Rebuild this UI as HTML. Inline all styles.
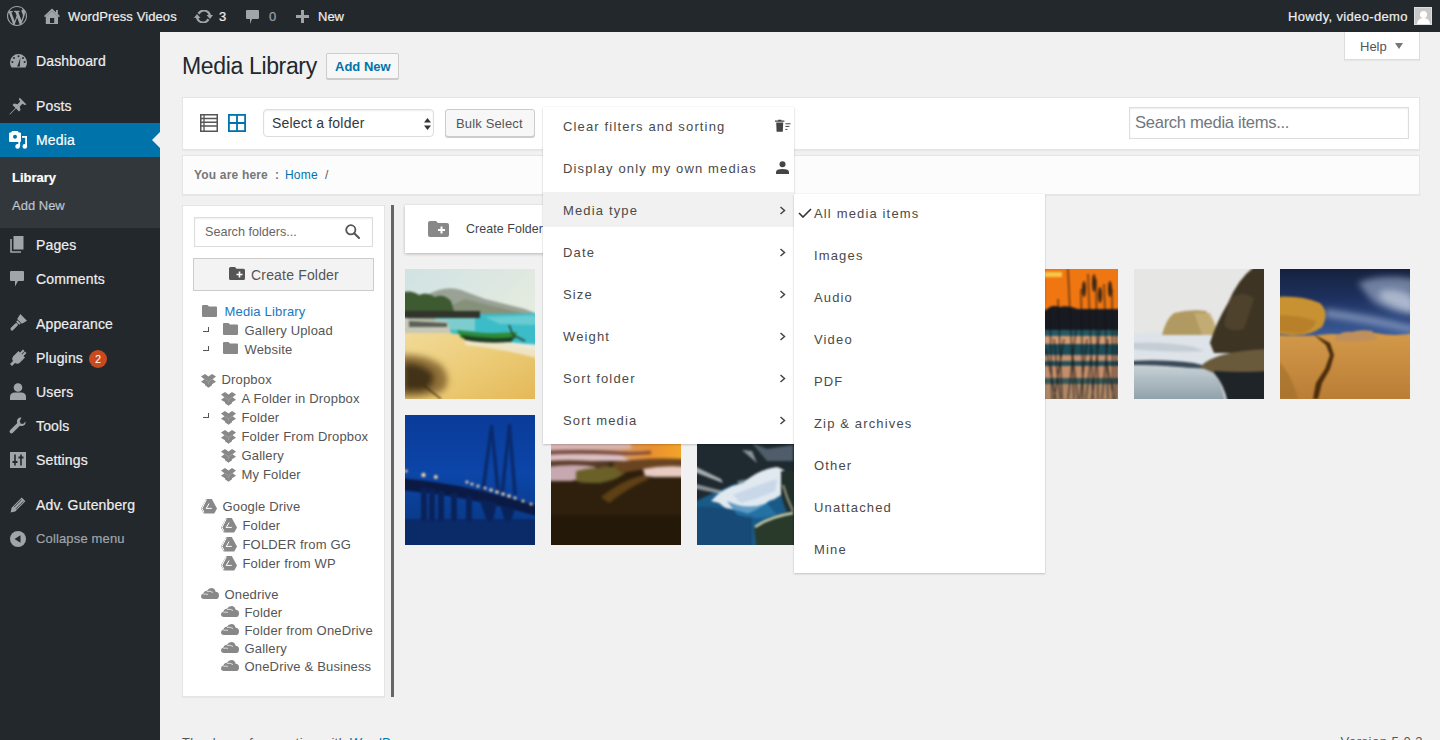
<!DOCTYPE html>
<html><head><meta charset="utf-8">
<style>
*{box-sizing:border-box;margin:0;padding:0}
html,body{width:1440px;height:740px;overflow:hidden;background:#f1f1f1;font-family:"Liberation Sans",sans-serif;color:#444;position:relative}
.a{position:absolute}
#bar{left:0;top:0;width:1440px;height:32px;background:#23282d;color:#eee;font-size:13px}
#bar .t{position:absolute;top:1px;line-height:32px;white-space:nowrap}
#side{left:0;top:32px;width:160px;height:708px;background:#23282d}
.mi{position:absolute;left:0;width:160px;height:34px;color:#eee;font-size:14px;line-height:34px;padding-left:36px;white-space:nowrap;letter-spacing:.15px}
.mi svg{position:absolute;left:0;top:0}
.sub{position:absolute;left:0;width:160px;color:rgba(240,245,250,.7);font-size:13px;padding-left:12px;line-height:28px;height:28px}
.mt{font-size:13px;line-height:15px;color:#4a4a4a;letter-spacing:1.15px;white-space:nowrap}
.mi,.sub,#bar .t{-webkit-text-stroke:.2px}
</style></head><body>
<!-- ADMIN BAR -->
<div id="bar" class="a">
  <svg class="a" style="left:7px;top:6px" width="20" height="20" viewBox="0 0 20 20"><path fill="#a0a5aa" d="M20 10c0-5.52-4.48-10-10-10S0 4.48 0 10s4.48 10 10 10 10-4.48 10-10zM7.78 15.37L4.37 6.22c.55-.02 1.17-.08 1.17-.08.5-.06.44-1.13-.06-1.11 0 0-1.45.11-2.37.11-.18 0-.37 0-.58-.01C4.12 2.69 6.87 1.11 10 1.11c2.33 0 4.45.87 6.05 2.34-.68-.11-1.65.39-1.65 1.58 0 .74.45 1.36.9 2.1.35.61.55 1.36.55 2.46 0 1.49-1.4 5-1.4 5l-3.03-8.37c.54-.02.82-.17.82-.17.5-.05.44-1.25-.06-1.22 0 0-1.44.12-2.38.12-.87 0-2.33-.12-2.33-.12-.5-.03-.56 1.2-.06 1.22l.92.08 1.26 3.41zM17.41 10c.24-.64.74-1.87.43-4.25.7 1.29 1.05 2.71 1.05 4.25 0 3.29-1.73 6.24-4.4 7.78.97-2.59 1.94-5.2 2.92-7.78zM6.1 18.09C3.12 16.65 1.11 13.53 1.11 10c0-1.3.23-2.48.72-3.59C3.25 10.3 4.67 14.2 6.1 18.09zm4.03-6.63l2.58 6.98c-.86.29-1.760.45-2.710.45-.79 0-1.57-.11-2.29-.33.81-2.380 1.620-4.740 2.420-7.100z"/></svg>
  <svg class="a" style="left:44px;top:8px" width="16" height="17" viewBox="0 0 16 17"><path d="M0.6 8.6L8 1.6L15.4 8.6" fill="none" stroke="#a0a5aa" stroke-width="1.6"/><rect x="12" y="2" width="1.8" height="4.5" fill="#a0a5aa"/><path d="M1.8 8.4L8 2.8L14 8.4V16H1.8Z" fill="#a0a5aa"/><rect x="6" y="10" width="4.2" height="5" fill="#23282d"/></svg>
  <div class="t" style="left:68px;letter-spacing:.1px">WordPress Videos</div>
  <svg class="a" style="left:194px;top:10px" width="19" height="13" viewBox="0 0 19 13"><path d="M9.5 1.5 A5 5 0 0 1 14.5 5 L12.5 5 L16 9 L19 5 L17 5 A7.5 7.5 0 0 0 3.5 3 L5.5 4.5 A5 5 0 0 1 9.5 1.5 Z M9.5 11.5 A5 5 0 0 1 4.5 8 L6.5 8 L3 4 L0 8 L2 8 A7.5 7.5 0 0 0 15.5 10 L13.5 8.5 A5 5 0 0 1 9.5 11.5 Z" fill="#a0a5aa"/></svg>
  <div class="t" style="left:219px">3</div>
  <svg class="a" style="left:246px;top:10px" width="13" height="14" viewBox="0 0 13 14"><path d="M0 1 Q0 0 1 0 L12 0 Q13 0 13 1 L13 8 Q13 9 12 9 L6 9 L4 14 L4 9 L1 9 Q0 9 0 8 Z" fill="#a0a5aa"/></svg>
  <div class="t" style="left:269px;color:#a0a5aa">0</div>
  <svg class="a" style="left:296px;top:10px" width="13" height="13" viewBox="0 0 13 13"><path d="M5 0 H8 V5 H13 V8 H8 V13 H5 V8 H0 V5 H5 Z" fill="#a0a5aa"/></svg>
  <div class="t" style="left:318px">New</div>
  <div class="t" style="left:1288px;letter-spacing:.35px">Howdy, video-demo</div>
  <div class="a" style="left:1414px;top:7px;width:18px;height:18px;background:#c8c8c8;border:1px solid #ddd;overflow:hidden">
    <div class="a" style="left:5px;top:3px;width:7px;height:7px;border-radius:50%;background:#fff"></div>
    <div class="a" style="left:2px;top:10px;width:13px;height:10px;border-radius:6px 6px 0 0;background:#fff"></div>
  </div>
</div>

<!-- SIDEBAR -->
<div id="side" class="a">
  <div class="mi" style="top:12px">Dashboard</div>
  <div class="mi" style="top:57px">Posts</div>
  <div class="mi" style="top:91px;background:#0073aa;color:#fff">Media</div>
  <div class="a" style="left:0;top:125px;width:160px;height:71px;background:#32373c"></div>
  <div class="sub" style="top:132px;color:#fff;font-weight:bold">Library</div>
  <div class="sub" style="top:160px">Add New</div>
  <div class="mi" style="top:196px">Pages</div>
  <div class="mi" style="top:230px">Comments</div>
  <div class="mi" style="top:275px">Appearance</div>
  <div class="mi" style="top:309px">Plugins</div>
  <div class="mi" style="top:343px">Users</div>
  <div class="mi" style="top:377px">Tools</div>
  <div class="mi" style="top:411px">Settings</div>
  <div class="mi" style="top:456px">Adv. Gutenberg</div>
  <div class="mi" style="top:490px;color:#a0a5aa;font-size:13px">Collapse menu</div>
</div>

<!-- SIDEBAR ICONS -->
<svg class="a" style="left:10px;top:54px" width="17" height="14" viewBox="0 0 17 14"><path d="M8.5 0A8.5 8.5 0 0 0 0 8.5Q0 11.5 1.5 13.5H15.5Q17 11.5 17 8.5A8.5 8.5 0 0 0 8.5 0Z" fill="#a0a5aa"/><g fill="#23282d"><circle cx="8.5" cy="2.3" r="1"/><circle cx="4" cy="4" r="1"/><circle cx="13" cy="4" r="1"/><circle cx="2.4" cy="8" r="1"/><circle cx="14.6" cy="8" r="1"/><path d="M10.5 3.5L8 10.5L7 12.5H10L9.8 10.5Z"/></g></svg>
<svg class="a" style="left:9px;top:97px" width="18" height="18" viewBox="0 0 18 18"><path d="M10.5 0.5L17.5 7.5L15.5 8L13.5 6.8L10.8 9.5L11.5 13L10 14.5L7 11.5L1 17.5L0.5 17L6.5 11L3.5 8L5 6.5L8.5 7.2L11.2 4.5L10 2.5Z" fill="#a0a5aa"/></svg>
<svg class="a" style="left:8px;top:130px" width="20" height="20" viewBox="0 0 20 20"><path d="M1 3.5Q1 2.5 2 2.5H3.2L4 1H9.8L10.6 2.5H12Q13 2.5 13 3.5V11Q13 12 12 12H2Q1 12 1 11Z" fill="#fff"/><circle cx="7" cy="6.8" r="2" fill="#0073aa"/><rect x="14" y="6" width="5" height="1.8" fill="#fff"/><rect x="17.2" y="6" width="1.8" height="11" fill="#fff"/><circle cx="16.8" cy="16.4" r="2.3" fill="#fff"/><rect x="10.3" y="11" width="1.8" height="5" fill="#fff"/><circle cx="9.6" cy="16.4" r="2.3" fill="#fff"/></svg>
<svg class="a" style="left:10px;top:236px" width="14" height="17" viewBox="0 0 14 17"><path d="M3.5 0H13.5V13.5H3.5Z" fill="#a0a5aa"/><path d="M1 3V16H11" stroke="#a0a5aa" stroke-width="1.6" fill="none"/></svg>
<svg class="a" style="left:10px;top:271px" width="14" height="16" viewBox="0 0 14 16"><path d="M1 0H13Q14 0 14 1V9Q14 10 13 10H8L5 15.5V10H1Q0 10 0 9V1Q0 0 1 0Z" fill="#a0a5aa"/></svg>
<svg class="a" style="left:8px;top:314px;overflow:visible" width="19" height="19" viewBox="0 0 19 19"><g transform="rotate(45 9.5 9.5)" fill="#a0a5aa"><path d="M4.8 0.8H14.2L12.8 6.6H6.2Z"/><rect x="7.3" y="7.2" width="4.4" height="2"/><rect x="7.9" y="9.6" width="3.2" height="9.2" rx="1.6"/></g></svg>
<svg class="a" style="left:10px;top:349px" width="17" height="17" viewBox="0 0 17 17"><path d="M13 0.5L14.5 2L11.5 5L12 5.5L15 2.5L16.5 4L13.5 7L15 8.5L9.5 14Q7.5 15.5 5 14L2 17L0 15L3 12Q1.5 9.5 3 7.5L8.5 2L10 3.5Z" fill="#a0a5aa"/></svg>
<svg class="a" style="left:10px;top:383px" width="16" height="17" viewBox="0 0 16 17"><circle cx="8" cy="4.5" r="4.3" fill="#a0a5aa"/><path d="M0 17V14Q0 9.5 5 9.5H11Q16 9.5 16 14V17Z" fill="#a0a5aa"/></svg>
<svg class="a" style="left:9px;top:417px" width="17" height="17" viewBox="0 0 17 17"><path d="M12.5 0.5Q9 0 8 3.5Q7.8 5 8.3 6L1 13.3Q0 14.5 1 15.8Q2.3 17 3.6 16L10.9 8.7Q12 9.2 13.5 9Q17 8 16.5 4.5L14 7L11.5 6.5L10.8 4Z" fill="#a0a5aa"/></svg>
<svg class="a" style="left:10px;top:452px" width="16" height="16" viewBox="0 0 16 16"><rect width="16" height="16" fill="#a0a5aa"/><path d="M5 2.5V13.5M11 2.5V13.5" stroke="#23282d" stroke-width="1.6"/><rect x="2.5" y="9" width="5" height="2" fill="#23282d"/><rect x="8.5" y="4.5" width="5" height="2" fill="#23282d"/></svg>
<svg class="a" style="left:10px;top:497px" width="16" height="16" viewBox="0 0 16 16"><path d="M11.8 0.6L15.4 4.2L5.2 14.4L0.6 15.4L1.6 10.8Z" fill="#a0a5aa"/><path d="M4 10.2L11.6 2.6M5.8 12L13.4 4.4" stroke="#23282d" stroke-width=".8"/></svg>
<svg class="a" style="left:10px;top:531px" width="16" height="16" viewBox="0 0 16 16"><circle cx="8" cy="8" r="8" fill="#a0a5aa"/><path d="M4.5 8L10.5 4.2V11.8Z" fill="#23282d"/></svg>
<div class="a" style="left:89px;top:350px;width:18px;height:18px;border-radius:9px;background:#ca4a1f;color:#fff;font-size:11px;line-height:18px;text-align:center">2</div>
<!-- media arrow -->
<div class="a" style="left:152px;top:132px;width:0;height:0;border-top:8px solid transparent;border-bottom:8px solid transparent;border-right:8px solid #f1f1f1"></div>

<!-- HELP -->
<div class="a" style="left:1344px;top:32px;width:76px;height:28px;background:#fff;border:1px solid #ddd;border-top:none;box-shadow:0 1px 1px rgba(0,0,0,.04)"></div>
<div class="a" style="left:1360px;top:39px;font-size:13px;color:#555;line-height:15px">Help</div>
<div class="a" style="left:1395px;top:43px;width:0;height:0;border-left:4px solid transparent;border-right:4px solid transparent;border-top:6px solid #777"></div>
<!-- TITLE -->
<div class="a" style="left:182px;top:52px;font-size:23px;line-height:28px;color:#23282d;letter-spacing:-.35px">Media Library</div>
<div class="a" style="left:326px;top:53px;width:73px;height:26px;border:1px solid #ccc;background:#f7f7f7;border-radius:2px;box-shadow:0 1px 0 #ccc"></div>
<div class="a" style="left:335px;top:59px;font-size:13px;font-weight:bold;color:#0073aa;line-height:15px">Add New</div>
<!-- TOOLBAR -->
<div class="a" style="left:182px;top:97px;width:1238px;height:53px;background:#fff;border:1px solid #e5e5e5;box-shadow:0 1px 1px rgba(0,0,0,.04)"></div>
<svg class="a" style="left:200px;top:114px" width="18" height="18" viewBox="0 0 18 18"><rect x=".75" y=".75" width="16.5" height="16.5" fill="none" stroke="#555" stroke-width="1.5"/><path d="M0 4.5H18M0 8.25H18M0 12H18M4 0V18" stroke="#555" stroke-width="1.3"/></svg>
<svg class="a" style="left:228px;top:114px" width="18" height="18" viewBox="0 0 18 18"><rect x=".9" y=".9" width="16.2" height="16.2" fill="none" stroke="#0073aa" stroke-width="1.8"/><path d="M9 0V18M0 9H18" stroke="#0073aa" stroke-width="1.8"/></svg>
<div class="a" style="left:263px;top:109px;width:171px;height:28px;border:1px solid #ddd;border-radius:4px;background:#fff;box-shadow:inset 0 1px 2px rgba(0,0,0,.07)"></div>
<div class="a" style="left:272px;top:115px;font-size:14px;line-height:16px;color:#32373c;letter-spacing:.2px">Select a folder</div>
<svg class="a" style="left:424px;top:118px" width="7" height="12" viewBox="0 0 7 12"><path d="M3.5 0L7 4.5H0Z M3.5 12L7 7.5H0Z" fill="#333"/></svg>
<div class="a" style="left:445px;top:109px;width:90px;height:28px;border:1px solid #ccc;border-radius:3px;background:#f7f7f7;box-shadow:0 1px 0 #ccc"></div>
<div class="a" style="left:456px;top:116px;font-size:13px;line-height:15px;color:#555;letter-spacing:.15px">Bulk Select</div>
<div class="a" style="left:1129px;top:107px;width:280px;height:32px;border:1px solid #ddd;background:#fff;box-shadow:inset 0 1px 2px rgba(0,0,0,.07)"></div>
<div class="a" style="left:1135px;top:114px;font-size:16.6px;line-height:18px;color:#72777c;letter-spacing:-.3px">Search media items...</div>
<!-- BREADCRUMB -->
<div class="a" style="left:182px;top:155px;width:1238px;height:40px;background:#fcfcfc;border:1px solid #e5e5e5;box-shadow:0 1px 1px rgba(0,0,0,.04)"></div>
<div class="a" style="left:194px;top:168px;font-size:12px;line-height:14px;color:#777;font-weight:bold;letter-spacing:.18px">You are here</div>
<div class="a" style="left:275px;top:168px;font-size:12px;line-height:14px;color:#777;font-weight:bold">:</div>
<div class="a" style="left:285px;top:168px;font-size:12px;line-height:14px;color:#0073aa;letter-spacing:.2px">Home</div>
<div class="a" style="left:325px;top:168px;font-size:12px;line-height:14px;color:#555">/</div>

<!-- FOLDER PANEL -->
<div class="a" style="left:182px;top:205px;width:203px;height:492px;background:#fff;border:1px solid #e5e5e5;box-shadow:0 1px 1px rgba(0,0,0,.04)"></div>
<div class="a" style="left:194px;top:217px;width:179px;height:30px;border:1px solid #ddd;background:#fff;box-shadow:inset 0 1px 2px rgba(0,0,0,.07)"></div>
<div class="a" style="left:205px;top:225px;font-size:12.6px;line-height:14px;color:#666">Search folders...</div>
<svg class="a" style="left:345px;top:224px" width="15" height="15" viewBox="0 0 15 15"><circle cx="5.8" cy="5.8" r="4.6" fill="none" stroke="#555" stroke-width="1.8"/><path d="M9.2 9.2L14 14" stroke="#555" stroke-width="2" stroke-linecap="round"/></svg>
<div class="a" style="left:193px;top:258px;width:181px;height:33px;border:1px solid #ccc;background:#f3f3f3"></div>
<svg class="a" style="left:229px;top:267px" width="16" height="13" viewBox="0 0 16 13"><path d="M0 1.5Q0 0 1.5 0H6L7.5 1.8H14.5Q16 1.8 16 3.3V11.5Q16 13 14.5 13H1.5Q0 13 0 11.5Z" fill="#555"/><path d="M10.5 4.5V10.5M7.5 7.5H13.5" stroke="#fff" stroke-width="1.6"/></svg>
<div class="a" style="left:251px;top:267px;font-size:14px;line-height:16px;color:#555;letter-spacing:.18px">Create Folder</div>
<svg class="a" style="left:202px;top:305px" width="15" height="12" viewBox="0 0 15 12"><path d="M0 1Q0 0 1 0H5.5L7 1.5H14Q15 1.5 15 2.5V11Q15 12 14 12H1Q0 12 0 11Z" fill="#888"/></svg>
<div class="a" style="left:224.5px;top:304px;font-size:13px;line-height:15px;color:#1a78c2;letter-spacing:0.17px;white-space:nowrap">Media Library</div>
<div class="a" style="left:203px;top:327px;width:6px;height:5px;border-right:1.3px solid #555;border-bottom:1.3px solid #555"></div>
<svg class="a" style="left:222.5px;top:323px" width="15" height="12" viewBox="0 0 15 12"><path d="M0 1Q0 0 1 0H5.5L7 1.5H14Q15 1.5 15 2.5V11Q15 12 14 12H1Q0 12 0 11Z" fill="#888"/></svg>
<div class="a" style="left:244.5px;top:323px;font-size:13px;line-height:15px;color:#555;letter-spacing:0.17px;white-space:nowrap">Gallery Upload</div>
<div class="a" style="left:203px;top:346px;width:6px;height:5px;border-right:1.3px solid #555;border-bottom:1.3px solid #555"></div>
<svg class="a" style="left:222.5px;top:342px" width="15" height="12" viewBox="0 0 15 12"><path d="M0 1Q0 0 1 0H5.5L7 1.5H14Q15 1.5 15 2.5V11Q15 12 14 12H1Q0 12 0 11Z" fill="#888"/></svg>
<div class="a" style="left:244.5px;top:342px;font-size:13px;line-height:15px;color:#555;letter-spacing:0.17px;white-space:nowrap">Website</div>
<svg class="a" style="left:201px;top:374px" width="15" height="14" viewBox="0 0 15 14"><path d="M4 0L7.5 2.4L11 0L15 2.6L11.6 5.2L15 7.8L11 10.3V11.2L7.5 13.8L4 11.2V10.3L0 7.8L3.4 5.2L0 2.6Z" fill="#888"/><path d="M3.6 5.2L7.5 7.6L11.4 5.2M7.5 7.8V10" stroke="#aaa" stroke-width=".6" fill="none"/></svg>
<div class="a" style="left:221.5px;top:372px;font-size:13px;line-height:15px;color:#555;letter-spacing:0.17px;white-space:nowrap">Dropbox</div>
<svg class="a" style="left:221px;top:392px" width="15" height="14" viewBox="0 0 15 14"><path d="M4 0L7.5 2.4L11 0L15 2.6L11.6 5.2L15 7.8L11 10.3V11.2L7.5 13.8L4 11.2V10.3L0 7.8L3.4 5.2L0 2.6Z" fill="#888"/><path d="M3.6 5.2L7.5 7.6L11.4 5.2M7.5 7.8V10" stroke="#aaa" stroke-width=".6" fill="none"/></svg>
<div class="a" style="left:241.5px;top:391px;font-size:13px;line-height:15px;color:#555;letter-spacing:0.17px;white-space:nowrap">A Folder in Dropbox</div>
<div class="a" style="left:203px;top:413px;width:6px;height:5px;border-right:1.3px solid #555;border-bottom:1.3px solid #555"></div>
<svg class="a" style="left:221px;top:411px" width="15" height="14" viewBox="0 0 15 14"><path d="M4 0L7.5 2.4L11 0L15 2.6L11.6 5.2L15 7.8L11 10.3V11.2L7.5 13.8L4 11.2V10.3L0 7.8L3.4 5.2L0 2.6Z" fill="#888"/><path d="M3.6 5.2L7.5 7.6L11.4 5.2M7.5 7.8V10" stroke="#aaa" stroke-width=".6" fill="none"/></svg>
<div class="a" style="left:241.5px;top:410px;font-size:13px;line-height:15px;color:#555;letter-spacing:0.17px;white-space:nowrap">Folder</div>
<svg class="a" style="left:221px;top:430px" width="15" height="14" viewBox="0 0 15 14"><path d="M4 0L7.5 2.4L11 0L15 2.6L11.6 5.2L15 7.8L11 10.3V11.2L7.5 13.8L4 11.2V10.3L0 7.8L3.4 5.2L0 2.6Z" fill="#888"/><path d="M3.6 5.2L7.5 7.6L11.4 5.2M7.5 7.8V10" stroke="#aaa" stroke-width=".6" fill="none"/></svg>
<div class="a" style="left:241.5px;top:429px;font-size:13px;line-height:15px;color:#555;letter-spacing:0.17px;white-space:nowrap">Folder From Dropbox</div>
<svg class="a" style="left:221px;top:449px" width="15" height="14" viewBox="0 0 15 14"><path d="M4 0L7.5 2.4L11 0L15 2.6L11.6 5.2L15 7.8L11 10.3V11.2L7.5 13.8L4 11.2V10.3L0 7.8L3.4 5.2L0 2.6Z" fill="#888"/><path d="M3.6 5.2L7.5 7.6L11.4 5.2M7.5 7.8V10" stroke="#aaa" stroke-width=".6" fill="none"/></svg>
<div class="a" style="left:241.5px;top:448px;font-size:13px;line-height:15px;color:#555;letter-spacing:0.17px;white-space:nowrap">Gallery</div>
<svg class="a" style="left:221px;top:468px" width="15" height="14" viewBox="0 0 15 14"><path d="M4 0L7.5 2.4L11 0L15 2.6L11.6 5.2L15 7.8L11 10.3V11.2L7.5 13.8L4 11.2V10.3L0 7.8L3.4 5.2L0 2.6Z" fill="#888"/><path d="M3.6 5.2L7.5 7.6L11.4 5.2M7.5 7.8V10" stroke="#aaa" stroke-width=".6" fill="none"/></svg>
<div class="a" style="left:241.5px;top:467px;font-size:13px;line-height:15px;color:#555;letter-spacing:0.17px;white-space:nowrap">My Folder</div>
<svg class="a" style="left:201px;top:499px" width="16" height="15" viewBox="0 0 16 15"><path d="M5.2 0H10.8L16 9.4L13.2 14.6H2.8L0 9.4Z" fill="#888"/><path d="M5.4 0.6L1 9.4L3 13.4M10.8 9.4H5M8 4.6L5.2 9.6" stroke="#fff" stroke-width="1" fill="none"/></svg>
<div class="a" style="left:222.5px;top:499px;font-size:13px;line-height:15px;color:#555;letter-spacing:0.17px;white-space:nowrap">Google Drive</div>
<svg class="a" style="left:221px;top:518px" width="16" height="15" viewBox="0 0 16 15"><path d="M5.2 0H10.8L16 9.4L13.2 14.6H2.8L0 9.4Z" fill="#888"/><path d="M5.4 0.6L1 9.4L3 13.4M10.8 9.4H5M8 4.6L5.2 9.6" stroke="#fff" stroke-width="1" fill="none"/></svg>
<div class="a" style="left:242.5px;top:518px;font-size:13px;line-height:15px;color:#555;letter-spacing:0.17px;white-space:nowrap">Folder</div>
<svg class="a" style="left:221px;top:537px" width="16" height="15" viewBox="0 0 16 15"><path d="M5.2 0H10.8L16 9.4L13.2 14.6H2.8L0 9.4Z" fill="#888"/><path d="M5.4 0.6L1 9.4L3 13.4M10.8 9.4H5M8 4.6L5.2 9.6" stroke="#fff" stroke-width="1" fill="none"/></svg>
<div class="a" style="left:242.5px;top:537px;font-size:13px;line-height:15px;color:#555;letter-spacing:0.17px;white-space:nowrap">FOLDER from GG</div>
<svg class="a" style="left:221px;top:556px" width="16" height="15" viewBox="0 0 16 15"><path d="M5.2 0H10.8L16 9.4L13.2 14.6H2.8L0 9.4Z" fill="#888"/><path d="M5.4 0.6L1 9.4L3 13.4M10.8 9.4H5M8 4.6L5.2 9.6" stroke="#fff" stroke-width="1" fill="none"/></svg>
<div class="a" style="left:242.5px;top:556px;font-size:13px;line-height:15px;color:#555;letter-spacing:0.17px;white-space:nowrap">Folder from WP</div>
<svg class="a" style="left:201px;top:588px" width="18" height="11" viewBox="0 0 18 11"><path d="M3 11Q0 11 0 8.3Q0 6 2.5 5.6Q3 2.8 6 2.8Q7.5 0 10.5 0Q14 0 14.6 3.8Q18 4 18 7.4Q18 11 14.5 11Z" fill="#888"/><path d="M2.5 6.5Q5 5.5 7 6.5 M6 3.5Q9 2.5 12 4.5" stroke="#fff" stroke-width=".7" fill="none"/></svg>
<div class="a" style="left:224.5px;top:587px;font-size:13px;line-height:15px;color:#555;letter-spacing:0.17px;white-space:nowrap">Onedrive</div>
<svg class="a" style="left:221px;top:606px" width="18" height="11" viewBox="0 0 18 11"><path d="M3 11Q0 11 0 8.3Q0 6 2.5 5.6Q3 2.8 6 2.8Q7.5 0 10.5 0Q14 0 14.6 3.8Q18 4 18 7.4Q18 11 14.5 11Z" fill="#888"/><path d="M2.5 6.5Q5 5.5 7 6.5 M6 3.5Q9 2.5 12 4.5" stroke="#fff" stroke-width=".7" fill="none"/></svg>
<div class="a" style="left:244.5px;top:605px;font-size:13px;line-height:15px;color:#555;letter-spacing:0.17px;white-space:nowrap">Folder</div>
<svg class="a" style="left:221px;top:624px" width="18" height="11" viewBox="0 0 18 11"><path d="M3 11Q0 11 0 8.3Q0 6 2.5 5.6Q3 2.8 6 2.8Q7.5 0 10.5 0Q14 0 14.6 3.8Q18 4 18 7.4Q18 11 14.5 11Z" fill="#888"/><path d="M2.5 6.5Q5 5.5 7 6.5 M6 3.5Q9 2.5 12 4.5" stroke="#fff" stroke-width=".7" fill="none"/></svg>
<div class="a" style="left:244.5px;top:623px;font-size:13px;line-height:15px;color:#555;letter-spacing:0.17px;white-space:nowrap">Folder from OneDrive</div>
<svg class="a" style="left:221px;top:642px" width="18" height="11" viewBox="0 0 18 11"><path d="M3 11Q0 11 0 8.3Q0 6 2.5 5.6Q3 2.8 6 2.8Q7.5 0 10.5 0Q14 0 14.6 3.8Q18 4 18 7.4Q18 11 14.5 11Z" fill="#888"/><path d="M2.5 6.5Q5 5.5 7 6.5 M6 3.5Q9 2.5 12 4.5" stroke="#fff" stroke-width=".7" fill="none"/></svg>
<div class="a" style="left:244.5px;top:641px;font-size:13px;line-height:15px;color:#555;letter-spacing:0.17px;white-space:nowrap">Gallery</div>
<svg class="a" style="left:221px;top:660px" width="18" height="11" viewBox="0 0 18 11"><path d="M3 11Q0 11 0 8.3Q0 6 2.5 5.6Q3 2.8 6 2.8Q7.5 0 10.5 0Q14 0 14.6 3.8Q18 4 18 7.4Q18 11 14.5 11Z" fill="#888"/><path d="M2.5 6.5Q5 5.5 7 6.5 M6 3.5Q9 2.5 12 4.5" stroke="#fff" stroke-width=".7" fill="none"/></svg>
<div class="a" style="left:244.5px;top:659px;font-size:13px;line-height:15px;color:#555;letter-spacing:0.17px;white-space:nowrap">OneDrive &amp; Business</div>
<!-- SPLITTER -->
<div class="a" style="left:391px;top:205px;width:3px;height:492px;background:#666"></div>
<!-- CREATE FOLDER BOX -->
<div class="a" style="left:405px;top:205px;width:160px;height:48px;background:#fff;box-shadow:0 1px 3px rgba(0,0,0,.25)"></div>
<svg class="a" style="left:428px;top:221px" width="21" height="16" viewBox="0 0 21 16"><path d="M0 2Q0 0 2 0H8L10 2H19Q21 2 21 4V14Q21 16 19 16H2Q0 16 0 14Z" fill="#888"/><path d="M13.5 5.5V12.5M10 9H17" stroke="#fff" stroke-width="2"/></svg>
<div class="a" style="left:466px;top:222px;font-size:12.4px;line-height:14px;color:#444;letter-spacing:.1px">Create Folder</div>
<!-- IMAGES -->
<div id="imgs"><svg class="a" style="left:405px;top:269px" width="130" height="130" viewBox="0 0 130 130"><defs><filter id="i1" x="-10%" y="-10%" width="120%" height="120%" color-interpolation-filters="sRGB"><feGaussianBlur stdDeviation="1.0"/></filter><clipPath id="ci1"><rect width="130" height="130"/></clipPath></defs><g clip-path="url(#ci1)"><g filter="url(#i1)">
<filter id="bb1" x="-50%" y="-50%" width="200%" height="200%"><feGaussianBlur stdDeviation="3"/></filter>
<linearGradient id="bsky" x1="0" y1="0" x2="1" y2="1"><stop offset="0" stop-color="#cfe2e4"/><stop offset="1" stop-color="#f2f0dc"/></linearGradient>
<linearGradient id="bsand" x1="0" y1="0" x2="1" y2="1"><stop offset="0" stop-color="#f2dc9c"/><stop offset=".5" stop-color="#eccc78"/><stop offset="1" stop-color="#e4b654"/></linearGradient>
<rect x="-5" y="-5" width="140" height="140" fill="url(#bsky)"/>
<path d="M5 44 L22 26 Q40 16 56 21 L80 30 L120 40 L135 46 L135 55 L0 55Z" fill="#9aa296"/>
<path d="M30 44 L60 30 L100 40 L135 48 L135 52 L30 52Z" fill="#7e8a6e" opacity=".7"/>
<path d="M-5 24 Q6 20 14 26 Q22 22 30 28 Q38 24 46 32 L50 46 L-5 48Z" fill="#3e5a30"/>
<path d="M30 46 L135 44 L135 76 Q90 72 40 66 L30 60Z" fill="#3cbcc8"/>
<path d="M30 48 L70 48 L70 62 L30 60Z" fill="#9ad4d0" opacity=".7"/>
<path d="M80 48 L135 46 L135 56 L95 55Z" fill="#68ccd2"/>
<rect x="-5" y="42" width="80" height="7" fill="#30342a"/>
<path d="M-5 58 Q40 62 80 70 Q110 77 135 82 L135 135 L-5 135Z" fill="url(#bsand)"/>
<path d="M-5 50 L42 52 L46 64 L-5 64Z" fill="#c8c8b8"/>
<path d="M4 52 L42 54 L42 58 L4 58Z" fill="#5a6058"/>
<path d="M60 76 Q100 80 135 90 L135 80 Q100 72 60 70Z" fill="#f0ead8" opacity=".8"/>
<path d="M52 61 Q80 66 112 63 L110 70 Q85 73 56 69Z" fill="#2e8a38"/>
<path d="M56 66 Q84 71 110 68 L106 73 Q80 75 60 71Z" fill="#1e3e22"/>
<path d="M104 56 L108 66 L120 72" stroke="#2a3a2a" stroke-width="1.5" fill="none"/>
<g filter="url(#bb1)"><path d="M-5 86 Q18 84 36 96 Q48 110 38 122 Q18 130 -5 128Z" fill="#7a5a28" opacity=".8"/>
<path d="M-2 94 Q14 92 28 104 Q32 116 18 122 L-2 122Z" fill="#3a2a12" opacity=".9"/></g>
<path d="M18 116 L36 130" stroke="#3a2a12" stroke-width="1.2"/>
</g></g></svg>
<svg class="a" style="left:988px;top:269px" width="130" height="130" viewBox="0 0 130 130"><defs><filter id="i5" x="-10%" y="-10%" width="120%" height="120%" color-interpolation-filters="sRGB"><feGaussianBlur stdDeviation="1.1"/></filter><clipPath id="ci5"><rect width="130" height="130"/></clipPath></defs><g clip-path="url(#ci5)"><g filter="url(#i5)">
<rect x="-5" y="-5" width="140" height="140" fill="#2a3238"/>
<rect x="-5" y="-5" width="140" height="46" fill="#f07612"/>
<rect x="56" y="3" width="18" height="5" fill="#f8c848"/>
<path d="M-5 44 L56 44 Q58 40 62 38 Q66 36 72 38 Q80 36 90 40 L135 40 L135 62 L-5 62Z" fill="#181a22"/>
<rect x="-5" y="61" width="140" height="6" fill="#245a66"/>
<rect x="-5" y="67" width="140" height="8" fill="#d49a72"/>
<rect x="-5" y="75" width="140" height="11" fill="#1e4c58"/>
<rect x="-5" y="86" width="140" height="6" fill="#c49070"/>
<rect x="-5" y="92" width="140" height="5" fill="#22505a"/>
<rect x="-5" y="97" width="140" height="12" fill="#c48e6a"/>
<rect x="-5" y="109" width="140" height="6" fill="#3a5a5a"/>
<rect x="-5" y="115" width="140" height="16" fill="#b08868"/>
<g stroke="#141414" stroke-width="1.2" opacity=".8" fill="none"><path d="M80 0 L86 130M93 20 L95 130M100 5 L105 130M108 10 L110 130M116 15 L120 130M124 20 L125 130M70 30 L74 130M62 40 L64 130M88 60 L80 130M99 70 L92 130M112 60 L104 130M120 70 L114 130M66 70 L72 130M128 60 L128 130M58 80 L68 130M76 70 L66 130M84 80 L90 130M104 80 L98 130M118 90 L126 130"/></g>
<g fill="#141414" opacity=".8"><ellipse cx="96" cy="20" rx="2" ry="8"/><ellipse cx="106" cy="14" rx="2" ry="9"/><ellipse cx="112" cy="26" rx="2" ry="8"/><ellipse cx="122" cy="20" rx="2" ry="8"/></g>
</g></g></svg>
<svg class="a" style="left:1134px;top:269px" width="130" height="130" viewBox="0 0 130 130"><defs><filter id="i6" x="-10%" y="-10%" width="120%" height="120%" color-interpolation-filters="sRGB"><feGaussianBlur stdDeviation="1.1"/></filter><clipPath id="ci6"><rect width="130" height="130"/></clipPath></defs><g clip-path="url(#ci6)"><g filter="url(#i6)">
<linearGradient id="csand" x1="0" y1="0" x2="0" y2="1"><stop offset="0" stop-color="#c8d2d8"/><stop offset="1" stop-color="#8a9aa4"/></linearGradient>
<rect x="-5" y="-5" width="140" height="140" fill="#e6e6e4"/>
<path d="M-5 64 L135 62 L135 96 L-5 96Z" fill="#dde3e8"/>
<path d="M-5 74 Q30 72 60 78 L70 82 Q40 84 -5 80Z" fill="#b8c0c8" opacity=".6"/>
<path d="M28 66 Q32 50 40 44 Q56 40 72 42 Q80 52 84 66Z" fill="#b09a62"/>
<path d="M60 44 L76 44 Q82 54 84 66 L68 66Z" fill="#c8b078" opacity=".8"/>
<path d="M-5 92 Q30 90 60 94 Q70 96 80 100 L80 104 Q50 96 -5 96Z" fill="#3a4a58"/>
<path d="M-5 96 L80 100 Q88 115 92 135 L-5 135Z" fill="url(#csand)"/>
<path d="M76 74 Q82 54 94 34 Q104 10 120 -2 L135 -5 L135 84 L80 84Z" fill="#3e3424"/>
<path d="M96 30 Q110 20 120 30 L110 60 Q96 64 90 56Z" fill="#5a4c34" opacity=".6"/>
<path d="M66 98 Q80 82 135 80 L135 104 Q100 106 80 104Z" fill="#6a5a3c"/>
<path d="M80 102 Q110 104 135 102 L135 135 L94 135 Q90 115 80 104Z" fill="#1e2428"/>
</g></g></svg>
<svg class="a" style="left:1280px;top:269px" width="130" height="130" viewBox="0 0 130 130"><defs><filter id="i7" x="-10%" y="-10%" width="120%" height="120%" color-interpolation-filters="sRGB"><feGaussianBlur stdDeviation="1.1"/></filter><clipPath id="ci7"><rect width="130" height="130"/></clipPath></defs><g clip-path="url(#ci7)"><g filter="url(#i7)">
<linearGradient id="rks" x1="0" y1="0" x2="0" y2="1"><stop offset="0" stop-color="#141e38"/><stop offset=".25" stop-color="#1e3260"/><stop offset=".5" stop-color="#3a5a98"/><stop offset=".6" stop-color="#5a80c0"/><stop offset="1" stop-color="#5a80c0"/></linearGradient>
<linearGradient id="rkg" x1="0" y1="0" x2="0" y2="1"><stop offset="0" stop-color="#d49a4a"/><stop offset="1" stop-color="#b87c34"/></linearGradient>
<filter id="rkb" x="-50%" y="-50%" width="200%" height="200%"><feGaussianBlur stdDeviation="3"/></filter>
<rect x="-5" y="-5" width="140" height="140" fill="url(#rks)"/>
<g filter="url(#rkb)"><path d="M78 14 Q100 4 135 10 L135 46 Q110 44 92 32Z" fill="#a8b8d4" opacity=".6"/>
<path d="M100 22 Q120 18 135 30 L135 44 Q115 40 100 30Z" fill="#d0d8e4" opacity=".6"/>
<path d="M45 40 Q90 46 135 58 L135 64 Q90 54 45 48Z" fill="#b0c0dc" opacity=".6"/></g>
<path d="M-5 66 Q20 68 40 66 Q55 64 62 66 Q75 60 95 64 Q115 68 135 64 L135 135 L-5 135Z" fill="url(#rkg)"/>
<path d="M55 68 Q62 62 72 63 Q80 60 92 62 L98 70 Q78 74 55 72Z" fill="#c0905c"/>
<path d="M-5 28 Q20 26 40 34 Q50 44 42 58 Q28 68 10 66 L-5 64Z" fill="#c89232"/>
<path d="M-5 46 Q18 46 36 52 Q34 62 20 65 L-5 62Z" fill="#a86e20" opacity=".5"/>
<path d="M33 65 L46 76 L50 86 L45 100 L36 114 L33 130 L38 130 L42 114 L50 100 L54 86 L50 74Z" fill="#4a2c0c"/>
<path d="M-5 90 Q10 100 18 130 L-5 130Z" fill="#9a6a28" opacity=".5"/>
</g></g></svg>
<svg class="a" style="left:405px;top:415px" width="130" height="130" viewBox="0 0 130 130"><defs><filter id="i8" x="-10%" y="-10%" width="120%" height="120%" color-interpolation-filters="sRGB"><feGaussianBlur stdDeviation="0.8"/></filter><clipPath id="ci8"><rect width="130" height="130"/></clipPath></defs><g clip-path="url(#ci8)"><g filter="url(#i8)">
<linearGradient id="brs" x1="0" y1="0" x2="0" y2="1"><stop offset="0" stop-color="#0a3a98"/><stop offset=".45" stop-color="#0c46a8"/><stop offset=".8" stop-color="#0a3a8a"/><stop offset="1" stop-color="#0a2e72"/></linearGradient>
<rect x="-5" y="-5" width="140" height="140" fill="url(#brs)"/>
<rect x="-5" y="104" width="140" height="32" fill="#0a2a68"/>
<g fill="#0a2a6c"><path d="M85 10 L88 10 L95 76 L91 76Z"/><path d="M85 10 L88 10 L80 76 L76 76Z"/><path d="M103 9 L106 9 L112 80 L108 80Z"/><path d="M103 9 L106 9 L99 80 L95 80Z"/></g>
<path d="M-5 63 Q60 68 135 92 L135 102 Q60 80 -5 75Z" fill="#0a1a44"/>
<g fill="#0a225a"><rect x="16" y="73" width="6" height="33"/><rect x="24" y="74" width="6" height="32"/><rect x="33" y="76" width="6" height="30"/><rect x="46" y="78" width="6" height="28"/><rect x="61" y="81" width="6" height="25"/><path d="M74 84 L82 106 L88 106 L92 88Z"/><path d="M95 90 L100 106 L106 106 L110 94Z"/></g>
<g fill="#f4d0a0"><circle cx="18.5" cy="60" r="2.2"/><circle cx="30.8" cy="62" r="2"/><circle cx="1" cy="56" r="1.6"/><circle cx="62" cy="67" r="1.6"/><circle cx="67" cy="69" r="1.6"/><circle cx="73" cy="71" r="1.6"/><circle cx="80" cy="73" r="1.6"/><circle cx="86" cy="75" r="1.8"/><circle cx="92" cy="77" r="1.8"/><circle cx="98" cy="79" r="1.8"/><circle cx="104" cy="81" r="1.8"/><circle cx="110" cy="83" r="1.6"/><circle cx="118" cy="86" r="1.5"/><circle cx="126" cy="89" r="1.5"/></g>
</g></g></svg>
<svg class="a" style="left:551px;top:415px" width="130" height="130" viewBox="0 0 130 130"><defs><filter id="i9" x="-10%" y="-10%" width="120%" height="120%" color-interpolation-filters="sRGB"><feGaussianBlur stdDeviation="1.8"/></filter><clipPath id="ci9"><rect width="130" height="130"/></clipPath></defs><g clip-path="url(#ci9)"><g filter="url(#i9)">
<linearGradient id="fgs" x1="0" y1="0" x2="1" y2="0"><stop offset="0" stop-color="#c8a0a0"/><stop offset=".5" stop-color="#d09870"/><stop offset=".75" stop-color="#e89030"/><stop offset="1" stop-color="#f4a828"/></linearGradient>
<rect x="-5" y="-5" width="140" height="140" fill="#2c1e0c"/>
<rect x="-5" y="-5" width="140" height="50" fill="url(#fgs)"/>
<path d="M-5 20 Q40 18 80 24 L80 34 Q40 36 -5 34Z" fill="#dcbcbc" opacity=".8"/><path d="M-5 36 Q30 34 60 36 Q80 38 100 36 L100 39 Q70 41 40 39 Q20 38 -5 40Z" fill="#5a3028" opacity=".8"/>
<path d="M-5 40 Q30 38 70 40 L80 46 Q40 46 -5 46Z" fill="#dcc0c4"/>
<path d="M-5 46 Q30 44 60 48 L56 52 Q30 50 -5 53Z" fill="#5a3a28"/>
<path d="M-5 52 Q25 48 45 52 Q40 62 20 66 L-5 66Z" fill="#c8a8b0"/>
<path d="M25 56 Q50 50 78 52 Q72 64 50 68 Q35 70 25 66Z" fill="#6a6028"/>
<path d="M60 48 Q90 42 135 44 L135 52 Q100 52 70 58Z" fill="#6a4420"/>
<path d="M92 54 Q112 50 135 52 L135 62 Q112 64 94 61Z" fill="#e8ccc4"/>
<path d="M-5 66 Q30 68 50 68 Q80 60 95 62 L135 62 L135 135 L-5 135Z" fill="#2e200c"/>
<path d="M50 82 Q70 66 92 60 L98 64 Q78 72 58 88Z" fill="#6a4818" opacity=".8"/>
<path d="M-5 100 L135 100 L135 135 L-5 135Z" fill="#241808"/>
</g></g></svg>
<svg class="a" style="left:697px;top:415px" width="130" height="130" viewBox="0 0 130 130"><defs><filter id="i10" x="-10%" y="-10%" width="120%" height="120%" color-interpolation-filters="sRGB"><feGaussianBlur stdDeviation="1.1"/></filter><clipPath id="ci10"><rect width="130" height="130"/></clipPath></defs><g clip-path="url(#ci10)"><g filter="url(#i10)">
<rect x="-5" y="-5" width="140" height="140" fill="#1a5a88"/>
<path d="M-5 -5 L135 -5 L135 60 L90 58 Q60 60 35 70 Q20 76 -5 88Z" fill="#1e2a30"/>
<path d="M55 28 L70 34 L96 30 L96 46 L70 46Z" fill="#5a6a78" opacity=".8"/>
<path d="M45 35 L60 48 L55 36Z" fill="#b8c0c8" opacity=".7"/>
<path d="M-5 50 L24 64 L26 68 L-5 56Z" fill="#c8ccd0" opacity=".8"/>
<path d="M-5 68 L26 76 L24 79 L-5 73Z" fill="#b8bcc0" opacity=".7"/>
<path d="M40 66 Q60 62 72 64 L70 67 Q55 68 42 69Z" fill="#9aa4a8" opacity=".7"/>
<path d="M14 86 Q26 72 46 68 Q62 54 80 52 Q94 56 92 70 Q86 82 72 86 Q60 96 46 100 Q30 96 22 88Z" fill="#e0e8f0"/>
<path d="M36 80 Q55 72 80 64 L78 76 Q60 84 44 88Z" fill="#c8d8e8"/>
<path d="M-5 92 Q30 90 55 100 L55 135 L-5 135Z" fill="#174a76"/>
<path d="M30 86 Q50 96 70 88 L80 100 Q60 106 40 100Z" fill="#2a7ab0" opacity=".7"/>
<path d="M84 56 L135 56 L135 135 L96 135 L96 108 Q88 96 84 80Z" fill="#22302c"/>
<path d="M57 112 Q72 100 96 96 L96 135 L60 135Z" fill="#2a3a2a"/>
<path d="M58 112 Q72 102 96 98" stroke="#c8d0b0" stroke-width="2.5" fill="none"/>
<path d="M86 70 Q90 84 96 96" stroke="#c8c8a8" stroke-width="2" fill="none" opacity=".7"/>
</g></g></svg></div>
<!-- DROPDOWN MENU -->
<div class="a" style="left:543px;top:107px;width:251px;height:337px;background:#fff;box-shadow:0 1px 2px rgba(0,0,0,.18),0 0 1px rgba(0,0,0,.12)"></div>
<div class="a" style="left:543px;top:192px;width:251px;height:35px;background:#f1f1f1"></div>
<div class="a mt" style="left:563px;top:119px">Clear filters and sorting</div>
<div class="a mt" style="left:563px;top:161px">Display only my own medias</div>
<div class="a mt" style="left:563px;top:203px">Media type</div>
<svg class="a" style="left:779px;top:206px" width="7" height="9" viewBox="0 0 7 9"><path d="M1.5 1L5.5 4.5L1.5 8" fill="none" stroke="#444" stroke-width="1.5"/></svg>
<div class="a mt" style="left:563px;top:245px">Date</div>
<svg class="a" style="left:779px;top:248px" width="7" height="9" viewBox="0 0 7 9"><path d="M1.5 1L5.5 4.5L1.5 8" fill="none" stroke="#444" stroke-width="1.5"/></svg>
<div class="a mt" style="left:563px;top:287px">Size</div>
<svg class="a" style="left:779px;top:290px" width="7" height="9" viewBox="0 0 7 9"><path d="M1.5 1L5.5 4.5L1.5 8" fill="none" stroke="#444" stroke-width="1.5"/></svg>
<div class="a mt" style="left:563px;top:329px">Weight</div>
<svg class="a" style="left:779px;top:332px" width="7" height="9" viewBox="0 0 7 9"><path d="M1.5 1L5.5 4.5L1.5 8" fill="none" stroke="#444" stroke-width="1.5"/></svg>
<div class="a mt" style="left:563px;top:371px">Sort folder</div>
<svg class="a" style="left:779px;top:374px" width="7" height="9" viewBox="0 0 7 9"><path d="M1.5 1L5.5 4.5L1.5 8" fill="none" stroke="#444" stroke-width="1.5"/></svg>
<div class="a mt" style="left:563px;top:413px">Sort media</div>
<svg class="a" style="left:779px;top:416px" width="7" height="9" viewBox="0 0 7 9"><path d="M1.5 1L5.5 4.5L1.5 8" fill="none" stroke="#444" stroke-width="1.5"/></svg>

<svg class="a" style="left:775px;top:119px" width="16" height="14" viewBox="0 0 16 14"><path d="M0 1.6H9.4V2.8H0Z M3 0.8H6.4V1.6H3Z M1.2 3.4H8.2L7.8 12.8H1.6Z" fill="#444"/><path d="M10.4 4.8H15.6M10.4 7.4H14.4M10.4 10.4H12.4" stroke="#444" stroke-width="1"/></svg>
<svg class="a" style="left:776px;top:161px" width="13" height="13" viewBox="0 0 13 13"><circle cx="6.5" cy="3.2" r="3" fill="#444"/><path d="M0 13V11.3Q0 8 6.5 8Q13 8 13 11.3V13Z" fill="#444"/></svg>
<!-- SUBMENU -->
<div class="a" style="left:794px;top:194px;width:251px;height:379px;background:#fff;box-shadow:0 1px 2px rgba(0,0,0,.18),0 0 1px rgba(0,0,0,.12)"></div>
<svg class="a" style="left:798px;top:208px" width="14" height="10" viewBox="0 0 14 10"><path d="M1 5L5 9L13 1" fill="none" stroke="#333" stroke-width="1.6"/></svg>
<div class="a mt" style="left:814px;top:206px">All media items</div>
<div class="a mt" style="left:814px;top:248px">Images</div>
<div class="a mt" style="left:814px;top:290px">Audio</div>
<div class="a mt" style="left:814px;top:332px">Video</div>
<div class="a mt" style="left:814px;top:374px">PDF</div>
<div class="a mt" style="left:814px;top:416px">Zip &amp; archives</div>
<div class="a mt" style="left:814px;top:458px">Other</div>
<div class="a mt" style="left:814px;top:500px">Unattached</div>
<div class="a mt" style="left:814px;top:542px">Mine</div>

<!-- FOOTER -->
<div class="a" style="left:181px;top:735px;font-size:13px;line-height:15px;color:#555;font-style:italic;letter-spacing:.3px">Thank you for creating with <span style="color:#0073aa">WordPress</span>.</div>
<div class="a" style="right:17px;top:734px;font-size:13px;line-height:15px;color:#555;letter-spacing:.5px">Version 5.0.3</div>
</body></html>
